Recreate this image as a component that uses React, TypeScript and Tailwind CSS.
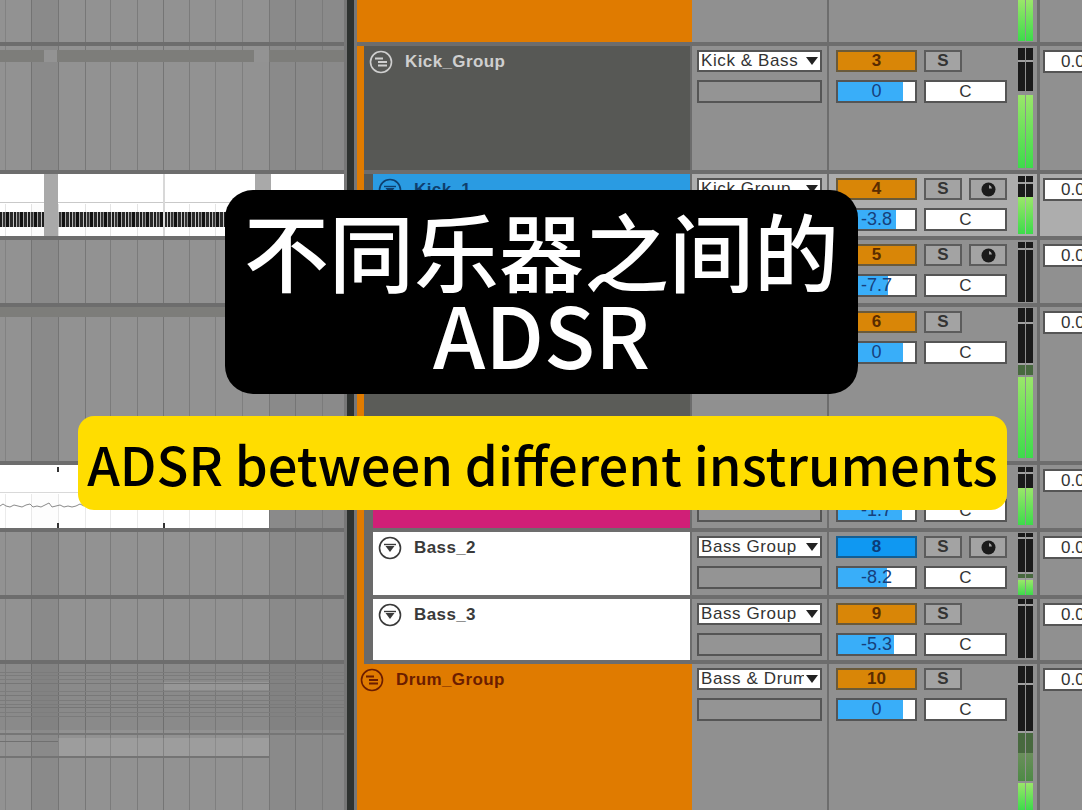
const ui = "font-['Liberation_Sans',Arial,sans-serif]";
const sep = 'border-b-[4px] border-[#6d6d6d]';

const gridLines = [
  { x: 'left-[5px]', c: 'bg-[#828282]' },
  { x: 'left-[31px]', c: 'bg-[#737373]' },
  { x: 'left-[58px]', c: 'bg-[#757575]' },
  { x: 'left-[85px]', c: 'bg-[#777777]' },
  { x: 'left-[110px]', c: 'bg-[#7b7b7b]' },
  { x: 'left-[137px]', c: 'bg-[#7b7b7b]' },
  { x: 'left-[163px]', c: 'bg-[#757575]' },
  { x: 'left-[189px]', c: 'bg-[#7b7b7b]' },
  { x: 'left-[215px]', c: 'bg-[#7f7f7f]' },
  { x: 'left-[242px]', c: 'bg-[#7f7f7f]' },
  { x: 'left-[269px]', c: 'bg-[#777777]' },
  { x: 'left-[295px]', c: 'bg-[#757575]' },
  { x: 'left-[322px]', c: 'bg-[#7b7b7b]' },
];

function Lines() {
  return (
    <>
      <div className="absolute inset-y-0 left-[31px] w-[27px] bg-black/5" />
      <div className="absolute inset-y-0 left-[269px] right-0 bg-black/5" />
      {gridLines.map((l) => (
        <div key={l.x} className={`absolute inset-y-0 w-px ${l.x} ${l.c}`} />
      ))}
    </>
  );
}

function KickClipStrip() {
  return (
    <div className="relative z-10 flex h-[12px] mt-[4px] bg-[#7d7d7a]">
      <div className="w-[44px] h-full" />
      <div className="w-[13px] h-full bg-[#939393]" />
      <div className="w-[197px] h-full" />
      <div className="w-[15px] h-full bg-[#939393]" />
      <div className="flex-1 h-full" />
    </div>
  );
}

function Clip1() {
  return (
    <div className="absolute inset-0 flex flex-col bg-white">
      <div className="absolute left-0 right-0 top-[30px] bottom-0 opacity-20">
        <Lines />
      </div>
      <div className="h-[29px] border-b border-[#c9c9c9]" />
      <div className="h-[9px]" />
      <div className="relative h-[15px] bg-[repeating-linear-gradient(90deg,#1d1d1d_0,#1d1d1d_2px,#b5b5b5_2px,#b5b5b5_3px,#333333_3px,#333333_5px,#8a8a8a_5px,#8a8a8a_6px,#111111_6px,#111111_9px,#a8a8a8_9px,#a8a8a8_10px,#2a2a2a_10px,#2a2a2a_13px,#c4c4c4_13px,#c4c4c4_14px)]" />
      <div className="absolute inset-y-0 left-[44px] w-[14px] bg-[#a9a9a9]" />
      <div className="absolute inset-y-0 left-[163px] w-[2px] bg-[#d8d8d8]" />
      <div className="absolute inset-y-0 left-[255px] w-[16px] bg-[#a9a9a9]" />
    </div>
  );
}

function Clip2() {
  return (
    <div className="absolute inset-y-0 left-0 w-[269px] bg-white">
      <div className="absolute left-0 right-0 top-[29px] bottom-0 opacity-15">
        <Lines />
      </div>
      <div className="h-[28px] border-b border-[#d9d9d9]" />
      <svg className="absolute left-0 top-[36px]" width="90" height="10" viewBox="0 0 90 10">
        <polyline
          points="0,5 3,3 6,5 10,6 14,4 18,5 22,6 26,4 30,3 33,6 37,5 41,6 45,4 49,2 52,6 56,5 60,4 64,6 68,5 72,6 76,5 80,3 84,5"
          fill="none"
          stroke="#8a8a8a"
          strokeWidth="1"
        />
      </svg>
      <div className="absolute left-[57px] top-[2px] w-[2px] h-[5px] bg-[#333333]" />
      <div className="absolute left-[57px] bottom-0 w-[2px] h-[5px] bg-[#333333]" />
      <div className="absolute left-[163px] bottom-0 w-[2px] h-[5px] bg-[#333333]" />
    </div>
  );
}

const midiLines = [
  { t: 'top-[8px]', c: 'bg-[#7b7b7b]' },
  { t: 'top-[11px]', c: 'bg-[#7b7b7b]' },
  { t: 'top-[15px]', c: 'bg-[#7d7d7d]' },
  { t: 'top-[19px]', c: 'bg-[#767676]' },
  { t: 'top-[27px]', c: 'bg-[#7d7d7d]' },
  { t: 'top-[31px]', c: 'bg-[#787878]' },
  { t: 'top-[36px]', c: 'bg-[#7b7b7b]' },
  { t: 'top-[40px]', c: 'bg-[#7b7b7b]' },
  { t: 'top-[43px]', c: 'bg-[#767676]' },
  { t: 'top-[48px]', c: 'bg-[#7d7d7d]' },
  { t: 'top-[52px]', c: 'bg-[#7b7b7b]' },
];

function MidiLines() {
  return (
    <>
      <div className="absolute left-0 right-0 top-0 h-[66px] bg-black/5" />
      <div className="absolute left-[163px] w-[106px] top-[18px] h-[8px] bg-white/10" />
      <div className="absolute left-[58px] w-[211px] top-[74px] h-[18px] bg-white/10" />
      {midiLines.map((l) => (
        <div key={l.t} className={`absolute left-0 right-0 h-px ${l.t} ${l.c}`} />
      ))}
      <div className="absolute left-0 right-0 top-[69px] h-[2px] bg-[#767676]" />
      <div className="absolute left-0 w-[58px] top-[77px] h-px bg-[#707070]" />
      <div className="absolute left-0 w-[269px] top-[92px] h-[2px] bg-[#747474]" />
    </>
  );
}

function GroupIcon({ color }: { color: string }) {
  return (
    <svg width="24" height="24" viewBox="0 0 24 24" fill="none" stroke={color} className="shrink-0">
      <circle cx="12" cy="12" r="10.5" strokeWidth="1.6" />
      <path d="M6 8.5h8M9 12h9M9 15.5h9" strokeWidth="1.8" />
    </svg>
  );
}

function TrackIcon({ color }: { color: string }) {
  return (
    <svg width="24" height="24" viewBox="0 0 24 24" fill="none" className="shrink-0">
      <circle cx="12" cy="12" r="10.5" stroke={color} strokeWidth="1.6" />
      <path d="M6 8.5h12" stroke={color} strokeWidth="1.4" />
      <path d="M7.5 10h9L12 16z" fill={color} />
    </svg>
  );
}

function Title({ name, text, group, pl }: { name: string; text: string; group?: boolean; pl: string }) {
  return (
    <div className={`flex items-start gap-[12px] ${pl} pt-[4px]`}>
      {group ? <GroupIcon color={text} /> : <TrackIcon color={text} />}
      <span className={`pt-[1px] text-[17px] leading-[22px] font-bold tracking-[0.4px] ${ui}`} style={{ color: text }}>
        {name}
      </span>
    </div>
  );
}

function TitleCell({ track, border }: { track: Track; border: string }) {
  return (
    <div className="w-[335px] shrink-0 flex bg-[#e07b00]">
      {track.inset ? (
        <>
          <div className="w-[7px] shrink-0" />
          <div className={`w-[9px] shrink-0 ${track.stripBg ?? 'bg-[#6a6a6a]'}`} />
          <div className={`w-[317px] shrink-0 ${track.titleBg} ${border}`}>
            {track.name && <Title name={track.name} text={track.text!} pl="pl-[5px]" />}
          </div>
          <div className="w-[2px] shrink-0 bg-[#6d6d6d]" />
        </>
      ) : track.name === 'Kick_Group' ? (
        <>
          <div className="w-[7px] shrink-0" />
          <div className={`w-[326px] shrink-0 ${track.titleBg} ${border}`}>
            <Title name={track.name} text={track.text!} group pl="pl-[5px]" />
          </div>
          <div className="w-[2px] shrink-0 bg-[#6d6d6d]" />
        </>
      ) : track.name ? (
        <div className="flex-1">
          <Title name={track.name} text={track.text!} group pl="pl-[3px]" />
        </div>
      ) : (
        <div className={`flex-1 ${border}`} />
      )}
    </div>
  );
}

function RoutingCell({ track }: { track: Track }) {
  if (!track.num) return <div className="w-[135px] shrink-0" />;
  return (
    <div className="w-[135px] shrink-0 pl-[5px] pt-[4px] pr-[5px] flex flex-col gap-[8px]">
      <div className={`relative flex items-center h-[22px] bg-white border-2 border-[#555555] pl-[2px] overflow-hidden text-[17px] tracking-[0.6px] text-[#333333] whitespace-nowrap ${ui}`}>
        {track.route}
        {track.route && (
          <div className="absolute right-0 inset-y-0 w-[16px] bg-white flex items-center justify-center">
            <svg width="12" height="8" viewBox="0 0 12 8">
              <path d="M0 0h12L6 8z" fill="#222222" />
            </svg>
          </div>
        )}
      </div>
      <div className="h-[23px] bg-[#949494] border-2 border-[#555555]" />
    </div>
  );
}

function SoloIcon() {
  return (
    <svg width="15" height="15" viewBox="0 0 15 15">
      <circle cx="7.5" cy="7.5" r="7" fill="#1a1a1a" />
      <path d="M8 3a4.5 4.5 0 0 1 3 3.5H8z" fill="#a3a3a3" />
    </svg>
  );
}

function MixerCell({ track }: { track: Track }) {
  return (
    <div className="w-[189px] shrink-0 pl-[7px] pt-[4px] grid grid-cols-[81px_38px_38px] gap-x-[7px] gap-y-[8px] auto-rows-min">
      <div
        className={`h-[22px] flex items-center justify-center border-2 text-[17px] font-bold ${ui} ${
          track.active ? 'bg-[#0f98f2] border-[#145e92] text-[#0b3c78]' : 'bg-[#d98607] border-[#6a5a3a] text-[#5a2c00]'
        }`}
      >
        {!track.covered && track.num}
      </div>
      <div className={`h-[22px] flex items-center justify-center bg-[#a3a3a3] border-2 border-[#5c5c5c] text-[17px] font-bold text-[#333333] ${ui}`}>
        {!track.covered && 'S'}
      </div>
      {track.arm ? (
        <div className="h-[22px] flex items-center justify-center bg-[#a3a3a3] border-2 border-[#5c5c5c]">
          <SoloIcon />
        </div>
      ) : (
        <div />
      )}
      <div className="relative h-[23px] bg-white border-2 border-[#555555] overflow-hidden">
        <div className="absolute inset-y-0 left-0 bg-[#39aef9]" style={{ width: `${track.fill}%` }} />
        <div className={`relative h-full flex items-center justify-center text-[18px] text-[#16407c] ${ui}`}>{track.vol}</div>
      </div>
      <div className={`col-span-2 h-[23px] flex items-center justify-center bg-white border-2 border-[#555555] text-[17px] text-[#333333] ${ui}`}>
        C
      </div>
    </div>
  );
}

function MeterBar({ parts }: { parts: Part[] }) {
  return (
    <div className="w-[7px] shrink-0 h-full flex flex-col">
      {parts.map((p, i) => (
        <div key={i} className={p.c} style={{ height: p.h }} />
      ))}
    </div>
  );
}

type Part = { h: number; c: string };

const gap = 'bg-[#a0a0a0]';
const dark = 'bg-[#1a1a1a]';
const dim = 'bg-[#48693f]';
const mid = 'bg-[linear-gradient(180deg,#6b8f5c,#4d8a45)]';
const green = 'bg-[linear-gradient(180deg,#9ae66a,#3ddb4b)]';
const none = 'bg-transparent';

type Track = {
  h: string;
  name?: string;
  titleBg: string;
  stripBg?: string;
  text?: string;
  group?: boolean;
  inset?: boolean;
  selected?: boolean;
  covered?: boolean;
  route?: string;
  num?: number;
  vol?: string;
  fill?: number;
  arm?: boolean;
  active?: boolean;
  meter: Part[];
  send?: boolean;
  left?: 'strip' | 'clip1' | 'clip2' | 'band' | 'midi';
};

const tracks: Track[] = [
  { h: 'h-[46px]', titleBg: 'bg-[#e07b00]', meter: [{ h: 41, c: green }] },
  {
    h: 'h-[128px]', name: 'Kick_Group', titleBg: 'bg-[#575855]', text: '#cfcfcf', group: true, route: 'Kick & Bass', num: 3, vol: '0', fill: 85, send: true, left: 'strip',
    meter: [{ h: 2, c: none }, { h: 12, c: dark }, { h: 2, c: gap }, { h: 29, c: dark }, { h: 4, c: none }, { h: 73, c: green }],
  },
  {
    h: 'h-[66px]', name: 'Kick_1', titleBg: 'bg-[#2a9be2]', stripBg: 'bg-[#575855]', text: '#0e3f6e', inset: true, selected: true, route: 'Kick Group', num: 4, vol: '-3.8', fill: 75, arm: true, send: true, left: 'clip1',
    meter: [{ h: 2, c: none }, { h: 6, c: dark }, { h: 2, c: gap }, { h: 13, c: dark }, { h: 37, c: green }],
  },
  {
    h: 'h-[67px]', titleBg: 'bg-[#2a9be2]', stripBg: 'bg-[#575855]', inset: true, num: 5, vol: '-7.7', fill: 65, arm: true, send: true,
    meter: [{ h: 2, c: none }, { h: 6, c: dark }, { h: 2, c: gap }, { h: 52, c: dark }],
  },
  {
    h: 'h-[158px]', titleBg: 'bg-[#5b5c58]', stripBg: 'bg-[#5b5c58]', inset: true, num: 6, vol: '0', fill: 85, send: true, left: 'band',
    meter: [{ h: 1, c: none }, { h: 14, c: dark }, { h: 2, c: gap }, { h: 39, c: dark }, { h: 2, c: gap }, { h: 10, c: dim }, { h: 2, c: none }, { h: 81, c: green }],
  },
  {
    h: 'h-[67px]', titleBg: 'bg-[#d01f77]', inset: true, covered: true, num: 7, vol: '-1.7', fill: 83, send: true, left: 'clip2',
    meter: [{ h: 2, c: none }, { h: 5, c: dark }, { h: 2, c: gap }, { h: 14, c: dark }, { h: 37, c: green }],
  },
  {
    h: 'h-[67px]', name: 'Bass_2', titleBg: 'bg-white', text: '#3a3a3a', inset: true, route: 'Bass Group', num: 8, vol: '-8.2', fill: 64, arm: true, active: true, send: true,
    meter: [{ h: 1, c: none }, { h: 4, c: dark }, { h: 2, c: gap }, { h: 33, c: dark }, { h: 2, c: gap }, { h: 4, c: dim }, { h: 2, c: gap }, { h: 15, c: green }],
  },
  {
    h: 'h-[65px]', name: 'Bass_3', titleBg: 'bg-white', text: '#3a3a3a', inset: true, route: 'Bass Group', num: 9, vol: '-5.3', fill: 73, send: true,
    meter: [{ h: 5, c: dark }, { h: 2, c: gap }, { h: 52, c: dark }],
  },
  {
    h: 'h-[146px]', name: 'Drum_Group', titleBg: 'bg-[#e07b00]', text: '#6b1d00', group: true, route: 'Bass & Drum', num: 10, vol: '0', fill: 85, send: true, left: 'midi',
    meter: [{ h: 2, c: none }, { h: 17, c: dark }, { h: 2, c: gap }, { h: 46, c: dark }, { h: 2, c: gap }, { h: 20, c: dim }, { h: 28, c: mid }, { h: 2, c: none }, { h: 27, c: green }],
  },
];

function TrackRow({ track, last }: { track: Track; last: boolean }) {
  const border = last ? '' : sep;
  const rowBg = track.selected ? 'bg-[#adadad]' : 'bg-[#909090]';
  return (
    <div className={`flex shrink-0 ${track.h}`}>
      <div className={`relative w-[344px] shrink-0 overflow-hidden bg-[#929292] ${border}`}>
        <Lines />
        {track.left === 'strip' && <KickClipStrip />}
        {track.left === 'band' && <div className="relative h-[10px] bg-[#7d7d7a]" />}
        {track.left === 'midi' && <MidiLines />}
        {track.left === 'clip1' && <Clip1 />}
        {track.left === 'clip2' && <Clip2 />}
      </div>
      <div className="w-[3px] shrink-0 bg-[#777777]" />
      <div className="w-[7px] shrink-0 bg-[#2e3230]" />
      <div className="w-[3px] shrink-0 bg-[#777777]" />
      <TitleCell track={track} border={border} />
      <div className={`flex flex-1 overflow-hidden ${rowBg} ${border}`}>
        <RoutingCell track={track} />
        <div className="w-[2px] shrink-0 bg-[#6d6d6d]" />
        {track.num ? <MixerCell track={track} /> : <div className="w-[189px] shrink-0" />}
        <div className="flex shrink-0 gap-px">
          <MeterBar parts={track.meter} />
          <MeterBar parts={track.meter} />
        </div>
        <div className="w-[4px] shrink-0" />
        <div className="w-[3px] shrink-0 bg-[#6d6d6d]" />
        <div className="pl-[3px] pt-[4px] shrink-0">
          {track.send && (
            <div className={`w-[60px] h-[23px] flex items-center pl-[16px] bg-white border-2 border-[#555555] text-[17px] text-[#333333] ${ui}`}>
              0.0
            </div>
          )}
        </div>
      </div>
    </div>
  );
}

export default function App() {
  return (
    <div className="relative w-[1082px] h-[810px] overflow-hidden bg-[#909090]">
      <div className="flex flex-col">
        {tracks.map((t, i) => (
          <TrackRow key={i} track={t} last={i === tracks.length - 1} />
        ))}
      </div>
      <div className="absolute left-[225px] top-[190px] w-[633px] h-[204px] rounded-[28px] bg-black flex flex-col items-center pt-[13px] text-white font-medium font-['Noto_Sans_CJK_SC','Noto_Sans',sans-serif]">
        <div className="text-[85px] leading-[92px] whitespace-nowrap">不同乐器之间的</div>
        <div className="text-[84px] leading-[76px] whitespace-nowrap">ADSR</div>
      </div>
      <div className="absolute left-[78px] top-[416px] w-[929px] h-[94px] rounded-[16px] bg-[#ffdd00] flex items-center justify-center text-black font-medium text-[52.5px] whitespace-nowrap font-['Noto_Sans_CJK_SC','Noto_Sans',sans-serif]">
        ADSR between different instruments
      </div>
    </div>
  );
}
